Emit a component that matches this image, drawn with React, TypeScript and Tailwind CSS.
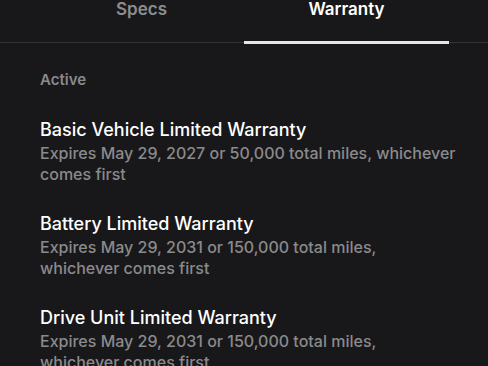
const warranties = [
  {
    title: "Basic Vehicle Limited Warranty",
    detail: "Expires May 29, 2027 or 50,000 total miles, whichever comes first",
  },
  {
    title: "Battery Limited Warranty",
    detail: "Expires May 29, 2031 or 150,000 total miles, whichever comes first",
  },
  {
    title: "Drive Unit Limited Warranty",
    detail: "Expires May 29, 2031 or 150,000 total miles, whichever comes first",
  },
];

export default function App() {
  return (
    <div className="w-[488px] h-[366px] overflow-hidden bg-[#18181a] font-['Inter',sans-serif]">
      {/* tabs */}
      <div className="relative -mt-[1px] border-b border-[#333335]">
        <div className="grid grid-cols-2 px-[39px]">
          <div className="flex justify-center pb-[23px] text-[17px] font-semibold leading-[20px] text-[#8d8d8f]">
            Specs
          </div>
          <div className="relative flex justify-center pb-[23px] text-[17px] font-semibold leading-[20px] text-white">
            Warranty
            <div className="absolute left-0 right-0 -bottom-[2px] h-[3px] bg-[#e6e6e6]" />
          </div>
        </div>
      </div>

      <div className="pl-[40px] pr-[31px] pt-[27px]">
        <div className="text-[15px] font-semibold leading-[20px] text-[#8a8a8c]">
          Active
        </div>
        <div className="mt-[29px] flex flex-col gap-[28px]">
          {warranties.map((w) => (
            <div key={w.title}>
              <div className="text-[18px] font-medium leading-[22px] text-white">
                {w.title}
              </div>
              <div className="mt-[2px] text-[16px] font-medium leading-[21px] text-[#8a8a8c]">
                {w.detail}
              </div>
            </div>
          ))}
        </div>
      </div>
    </div>
  );
}
